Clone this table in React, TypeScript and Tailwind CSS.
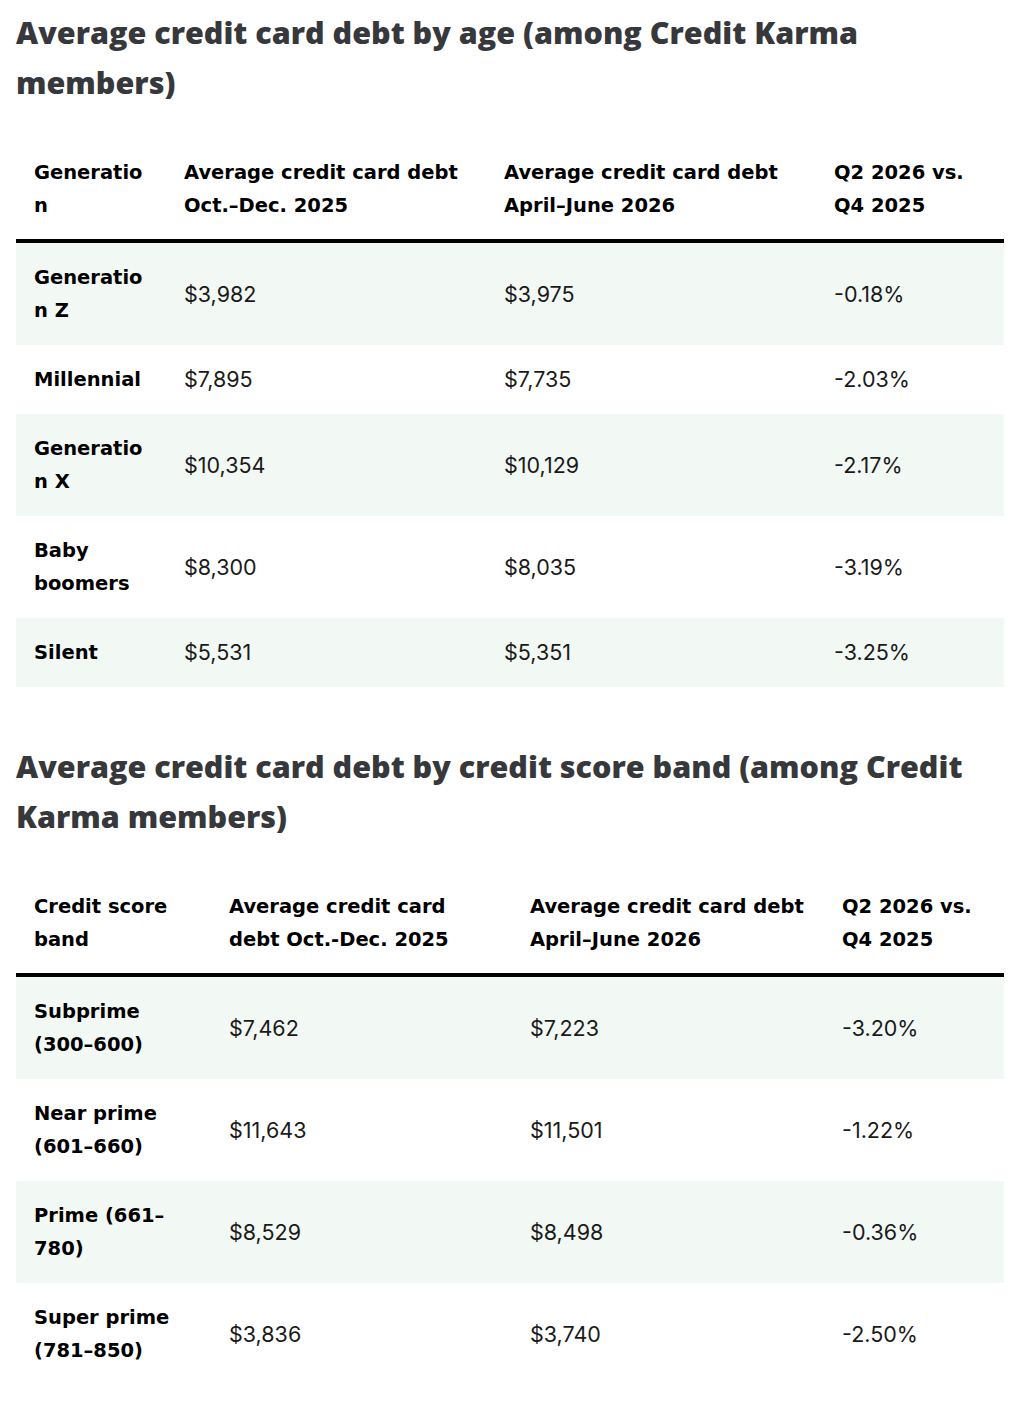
const ageRows = [
  ['Generation Z', '$3,982', '$3,975', '-0.18%'],
  ['Millennial', '$7,895', '$7,735', '-2.03%'],
  ['Generation X', '$10,354', '$10,129', '-2.17%'],
  ['Baby boomers', '$8,300', '$8,035', '-3.19%'],
  ['Silent', '$5,531', '$5,351', '-3.25%'],
]

const scoreRows = [
  ['Subprime (300–600)', '$7,462', '$7,223', '-3.20%'],
  ['Near prime (601–660)', '$11,643', '$11,501', '-1.22%'],
  ['Prime (661–780)', '$8,529', '$8,498', '-0.36%'],
  ['Super prime (781–850)', '$3,836', '$3,740', '-2.50%'],
]

interface DebtTableProps {
  widths: string[]
  head: string[]
  rows: string[][]
}

function DebtTable({ widths, head, rows }: DebtTableProps) {
  return (
    <table className="w-full table-fixed border-collapse leading-[33px]">
      <colgroup>
        {widths.map((w, i) => (
          <col key={i} style={{ width: w }} />
        ))}
      </colgroup>
      <thead>
        <tr className="border-b-4 border-black">
          {head.map((h, i) => (
            <th
              key={i}
              className={`pl-[18px] pt-[18px] pb-[17px] text-left align-middle text-[19.5px] font-bold text-black break-words font-['DejaVu_Sans',sans-serif] ${
                i === 0 ? 'pr-[18px]' : 'pr-[14px]'
              }`}
            >
              {h}
            </th>
          ))}
        </tr>
      </thead>
      <tbody>
        {rows.map((r, ri) => (
          <tr key={ri} className={ri % 2 === 0 ? 'bg-[#f2f8f4]' : 'bg-white'}>
            {r.map((c, ci) =>
              ci === 0 ? (
                <td
                  key={ci}
                  className="py-[18px] pl-[18px] pr-[18px] align-middle text-[19.5px] font-bold text-black break-words font-['DejaVu_Sans',sans-serif]"
                >
                  {c}
                </td>
              ) : (
                <td
                  key={ci}
                  className="py-[18px] pl-[18px] pr-[14px] align-middle text-[21.5px] font-normal text-[#1a1a1a] font-['Inter',sans-serif]"
                >
                  {c}
                </td>
              ),
            )}
          </tr>
        ))}
      </tbody>
    </table>
  )
}

export default function App() {
  return (
    <div className="min-h-[1422px] bg-white pl-4 pr-5 pt-[7px]">
      <h2 className="text-[30.5px] font-extrabold leading-[50px] text-[#36383b] font-['Open_Sans','Liberation_Sans',sans-serif]">
        Average credit card debt by age (among Credit Karma members)
      </h2>
      <div className="mt-[31px]">
        <DebtTable
          widths={['150px', '320px', '330px', '188px']}
          head={[
            'Generation',
            'Average credit card debt Oct.–Dec. 2025',
            'Average credit card debt April–June 2026',
            'Q2 2026 vs. Q4 2025',
          ]}
          rows={ageRows}
        />
      </div>
      <h2 className="mt-[54px] text-[30.5px] font-extrabold leading-[50px] text-[#36383b] font-['Open_Sans','Liberation_Sans',sans-serif]">
        Average credit card debt by credit score band (among Credit Karma members)
      </h2>
      <div className="mt-[31px]">
        <DebtTable
          widths={['195px', '301px', '312px', '180px']}
          head={[
            'Credit score band',
            'Average credit card debt Oct.-Dec. 2025',
            'Average credit card debt April–June 2026',
            'Q2 2026 vs. Q4 2025',
          ]}
          rows={scoreRows}
        />
      </div>
    </div>
  )
}
